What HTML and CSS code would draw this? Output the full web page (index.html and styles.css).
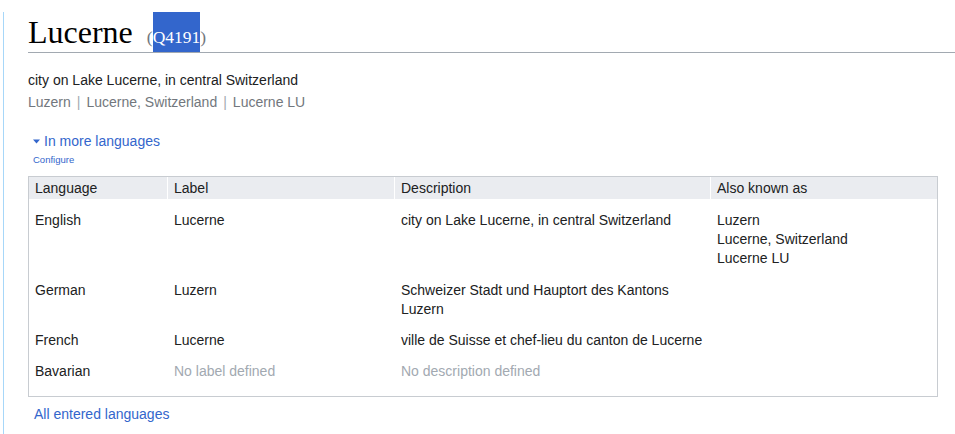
FILE: index.html
```html
<!DOCTYPE html>
<html>
<head>
<meta charset="utf-8">
<link rel="stylesheet" href="styles.css">
</head>
<body>
<div class="content">
  <h1 class="title"><span class="label">Lucerne</span><span class="id">(<span class="sel">Q4191</span>)</span></h1>
  <div class="desc">city on Lake Lucerne, in central Switzerland</div>
  <div class="aliases"><span>Luzern</span><span class="sep">|</span><span>Lucerne, Switzerland</span><span class="sep">|</span><span>Lucerne LU</span></div>
  <div class="toggle"><svg class="tri" width="7" height="5" viewBox="0 0 7 5"><path d="M0 0.5 L7 0.5 L3.5 4.5 Z" fill="#36c"/></svg><span>In more languages</span></div>
  <div class="configure">Configure</div>
  <table class="langs">
    <colgroup><col class="c1"><col class="c2"><col class="c3"><col class="c4"></colgroup>
    <thead>
      <tr><th>Language</th><th>Label</th><th>Description</th><th>Also known as</th></tr>
    </thead>
    <tbody>
      <tr class="first"><td>English</td><td>Lucerne</td><td>city on Lake Lucerne, in central Switzerland</td><td>Luzern<br>Lucerne, Switzerland<br>Lucerne LU</td></tr>
      <tr><td>German</td><td>Luzern</td><td>Schweizer Stadt und Hauptort des Kantons Luzern</td><td></td></tr>
      <tr><td>French</td><td>Lucerne</td><td>ville de Suisse et chef-lieu du canton de Lucerne</td><td></td></tr>
      <tr class="last"><td>Bavarian</td><td class="empty">No label defined</td><td class="empty">No description defined</td><td></td></tr>
    </tbody>
  </table>
  <div class="all">All entered languages</div>
</div>
</body>
</html>
```

FILE: styles.css
```css
html, body {
  margin: 0;
  padding: 0;
  background: #fff;
}
body {
  font-family: "Liberation Sans", Arial, sans-serif;
  font-size: 14px;
  color: #202122;
}
.content {
  margin-left: 3px;
  border-left: 1px solid #a7d7f9;
  padding-left: 24px;
  min-height: 434px;
  box-sizing: border-box;
}
.title {
  margin: 12px 0 0;
  font-family: "Liberation Serif", "DejaVu Serif", serif;
  font-weight: normal;
  font-size: 32px;
  line-height: 40px;
  color: #000;
  border-bottom: 1px solid #a2a9b1;
  white-space: nowrap;
}
.title .id {
  font-size: 17.5px;
  line-height: 1;
  color: #72777d;
  margin-left: 14px;
}
.title .sel {
  background: #3366cc;
  color: #fff;
  padding: 15px 0 5px;
}
.desc {
  margin-top: 16px;
  line-height: 22px;
  color: #202122;
}
.aliases {
  line-height: 22px;
  color: #72777d;
}
.aliases .sep {
  color: #a2a9b1;
  margin: 0 6px;
}
.toggle {
  margin-top: 17px;
  margin-left: 5px;
  line-height: 22px;
  color: #36c;
  display: flex;
  align-items: center;
}
.toggle .tri {
  margin-right: 4px;
  margin-top: 1px;
}
.configure {
  margin-top: 2px;
  margin-left: 5px;
  font-size: 9.5px;
  line-height: 12px;
  color: #36c;
}
.langs {
  margin-top: 10px;
  width: 910px;
  border: 1px solid #c8ccd1;
  border-collapse: separate;
  border-spacing: 0;
  table-layout: fixed;
}
.c1 { width: 139px; }
.c2 { width: 227px; }
.c3 { width: 316px; }
.c4 { width: 226px; }
.langs th {
  background: #eaecf0;
  font-weight: normal;
  text-align: left;
  padding: 1.5px 4px 1.5px 6px;
  line-height: 19px;
  border-right: 1px solid #fff;
}
.langs th:last-child {
  border-right: none;
}
.langs td {
  vertical-align: top;
  padding: 10px 4px 2.5px 6px;
  line-height: 19px;
  border-right: 1px solid transparent;
}
.langs td:last-child {
  border-right: none;
}
.langs tr.first td {
  padding-top: 12px;
}
.langs tr.last td {
  padding-top: 9px;
  padding-bottom: 15px;
}
.langs td.empty {
  color: #a2a9b1;
}
.all {
  margin-top: 6px;
  margin-left: 6px;
  line-height: 22px;
  color: #36c;
}
```
